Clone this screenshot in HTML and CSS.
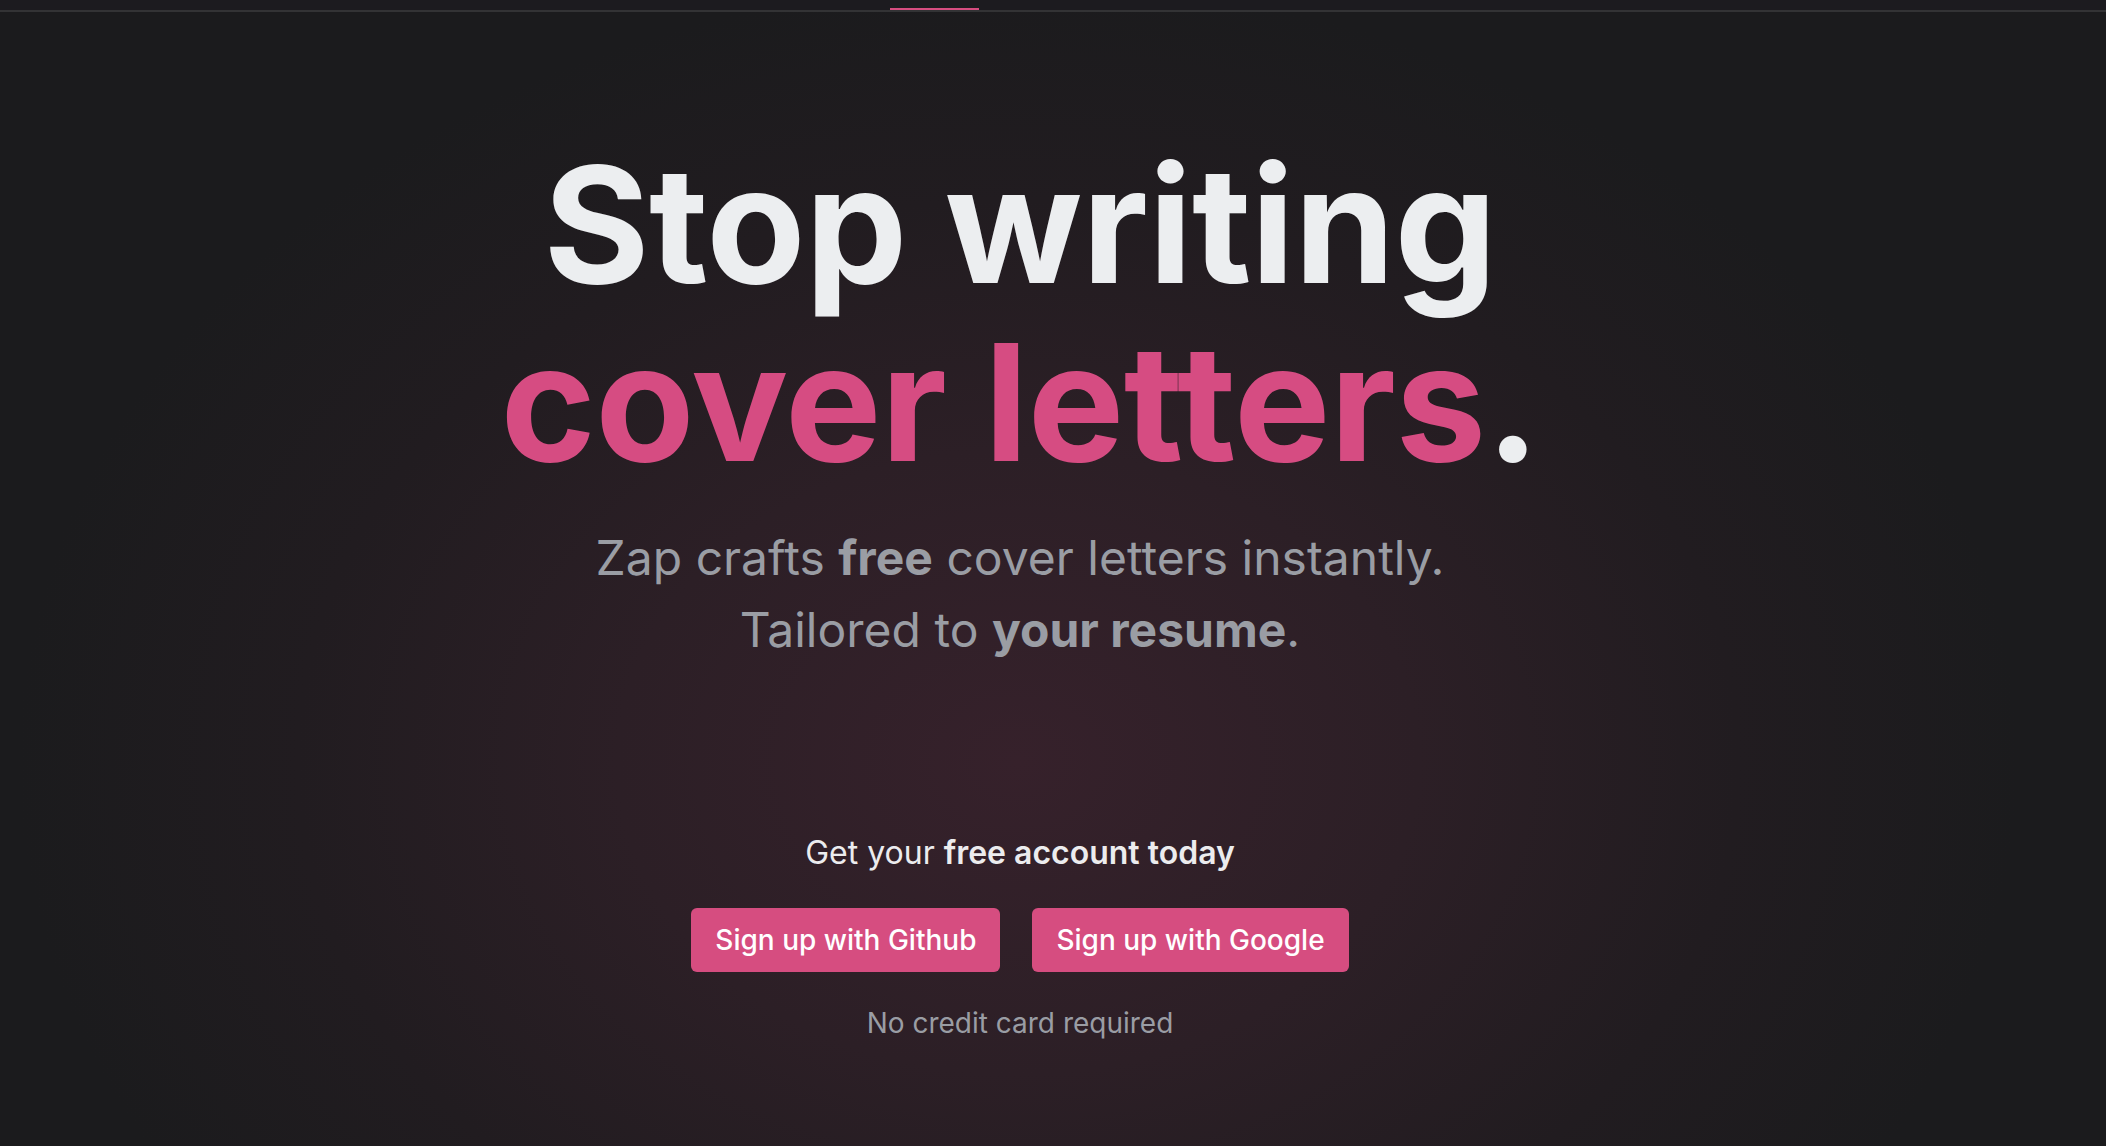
FILE: index.html
```html
<!DOCTYPE html>
<html lang="en">
<head>
<meta charset="utf-8">
<title>Zap — Stop writing cover letters</title>
<link rel="stylesheet" href="styles.css">
</head>
<body>
<header class="topbar">
  <span class="tab-active"></span>
</header>
<main class="hero">
  <div class="hero-inner">
    <h1 class="title">Stop writing<br><span class="accent">cover letters</span>.</h1>
    <p class="lead">Zap crafts <strong>free</strong> cover letters instantly.<br>Tailored to <strong>your resume</strong>.</p>
    <p class="cta-text">Get your <strong>free account today</strong></p>
    <div class="buttons">
      <a class="btn" href="#">Sign up with Github</a>
      <a class="btn" href="#">Sign up with Google</a>
    </div>
    <p class="note">No credit card required</p>
  </div>
</main>
</body>
</html>
```
FILE: styles.css
```css
* { box-sizing: border-box; }
html, body { height: 100%; }
body {
  margin: 0;
  background: #1c1b1e;
  font-family: Inter, "Noto Sans", sans-serif;
  color: #e9eaec;
  overflow: hidden;
}
.topbar {
  height: 12px;
  border-bottom: 2px solid #333335;
  background: #1c1b1f;
  display: flex;
  padding-left: 890px;
}
.tab-active {
  width: 89px;
  height: 10px;
  border-bottom: 2px solid #d64d80;
}
.hero {
  height: calc(100% - 12px);
  background: radial-gradient(ellipse 1000px 780px at 1018px 750px, #36212b 0%, #2c1f26 40%, #211c20 72%, #1b1b1d 100%);
}
.hero-inner {
  margin-right: 66px;
  display: flex;
  flex-direction: column;
  align-items: center;
  text-align: center;
  padding-top: 123px;
}
.title {
  margin: 0;
  font-size: 162px;
  line-height: 178px;
  font-weight: 700;
  color: #eceef0;
  letter-spacing: -0.5px;
}
.accent { color: #d64c82; }
.lead {
  margin: 31px 0 0;
  font-size: 48px;
  line-height: 72px;
  color: #9a9da4;
  font-weight: 400;
}
.lead strong { font-weight: 700; }
.cta-text {
  margin: 164px 0 0;
  font-size: 32px;
  line-height: 45px;
  color: #ececee;
}
.cta-text strong { font-weight: 600; }
.buttons {
  margin-top: 33px;
  display: flex;
  gap: 32px;
}
.btn {
  display: block;
  height: 64px;
  padding: 0 24px;
  line-height: 64px;
  font-size: 28px;
  font-weight: 500;
  color: #ffffff;
  background: #d64d80;
  border-radius: 6px;
  text-decoration: none;
}
.note {
  margin: 31px 0 0;
  font-size: 28px;
  line-height: 40px;
  color: #9a9da4;
}
```
